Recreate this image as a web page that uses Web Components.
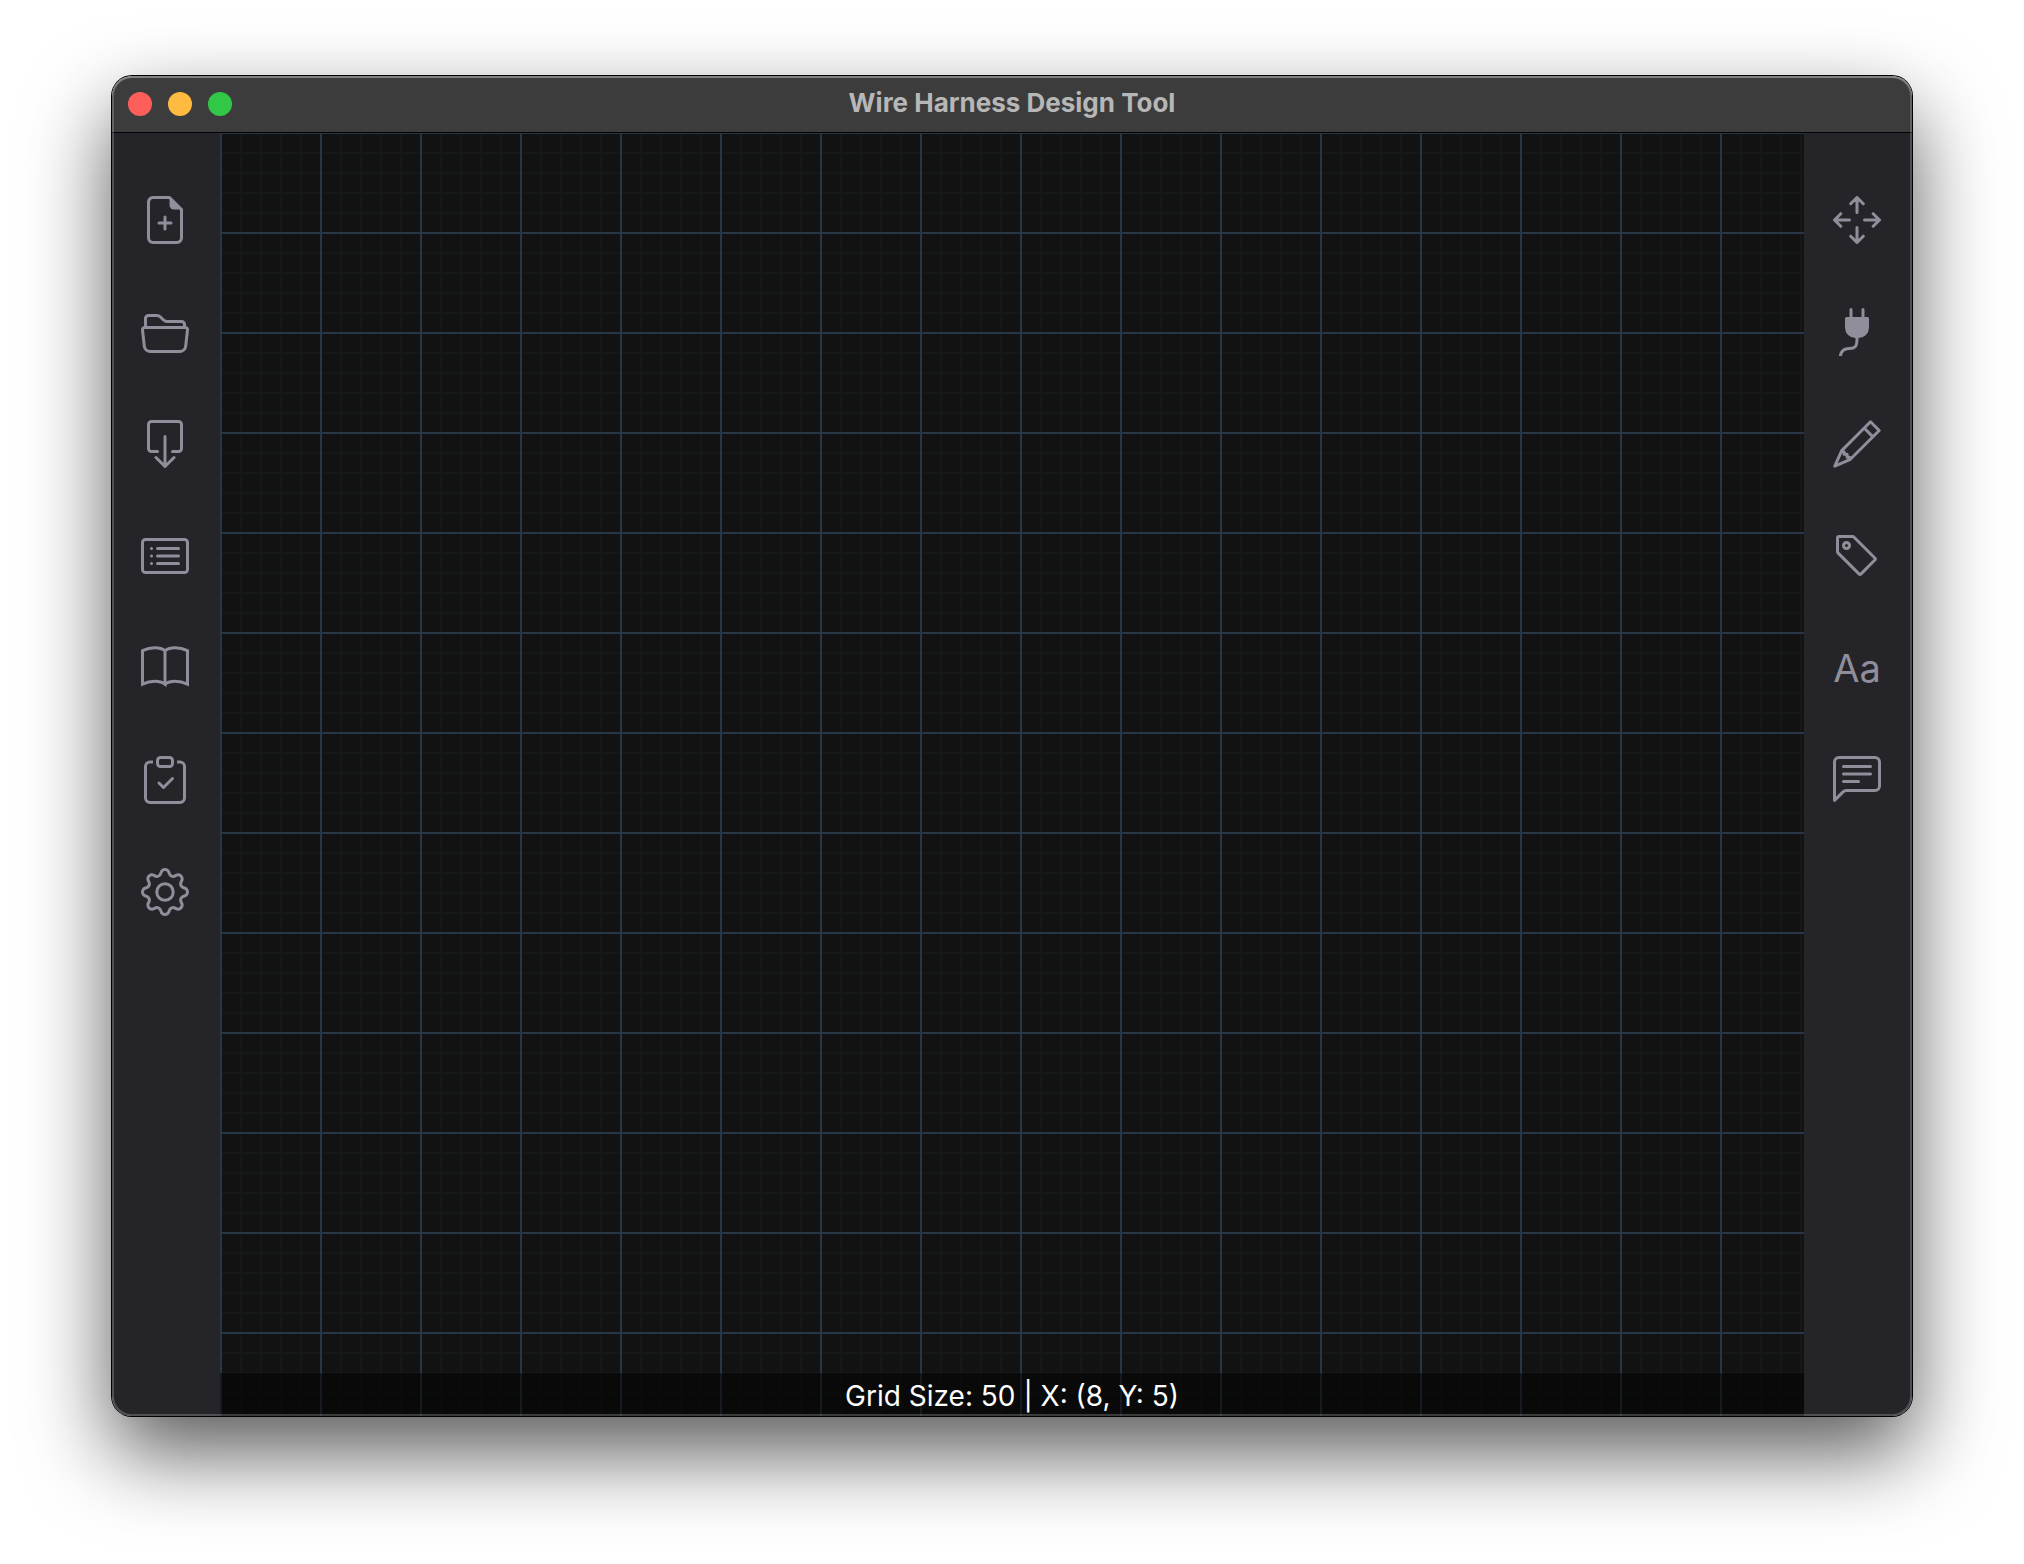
<!DOCTYPE html>
<html lang="en">
<head>
<meta charset="utf-8">
<title>Wire Harness Design Tool</title>
<style>
  html, body { height: 100%; margin: 0; }
  body { background: #fff; font-family: Inter, "Liberation Sans", sans-serif; }
</style>
</head>
<body>
<harness-app></harness-app>

<script>
const define = (name, html, setup) => {
  const template = document.createElement('template');
  template.innerHTML = html;
  customElements.define(name, class extends HTMLElement {
    constructor() {
      super();
      this.attachShadow({ mode: 'open' }).append(template.content.cloneNode(true));
    }
    connectedCallback() { if (setup) setup(this); }
  });
};

// All icons are drawn on a 16 x 16 grid.
const line = (d) => `<path d="${d}" fill="none" stroke="currentColor" stroke-linecap="round" stroke-linejoin="round"/>`;
const sharp = (d) => `<path d="${d}" fill="none" stroke="currentColor"/>`;
const fill = (d) => `<path d="${d}" fill="currentColor" fill-rule="evenodd"/>`;
const icons = {
  file: line('M9.5.5H4A1.5 1.5 0 0 0 2.5 2v12A1.5 1.5 0 0 0 4 15.5h8a1.5 1.5 0 0 0 1.5-1.5V4.5zM8 7v4M6 9h4') +
        fill('M9.5.3v2.7A1.5 1.5 0 0 0 11 4.5h2.8z'),
  folder: line('M1.5 6.5V3.5a1 1 0 0 1 1-1h2.7c.6 0 1 .2 1.4.6l.8.8c.4.4.8.6 1.4.6h4.7a1 1 0 0 1 1 1v1M1.2 6.5h13.6a.7.7 0 0 1 .7.8l-.6 5.4a2 2 0 0 1-2 1.8H3.1a2 2 0 0 1-2-1.8L.5 7.3a.7.7 0 0 1 .7-.8z'),
  save: line('M5.5 10.5h-2a1 1 0 0 1-1-1v-8a1 1 0 0 1 1-1h9a1 1 0 0 1 1 1v8a1 1 0 0 1-1 1h-2M8 5.5v10M5 12.5l3 3 3-3'),
  list: line('M1.5 2.5h13a1 1 0 0 1 1 1v9a1 1 0 0 1-1 1h-13a1 1 0 0 1-1-1v-9a1 1 0 0 1 1-1zM5.5 5.5h7M5.5 8h7M5.5 10.5h7M3.5 5.5h0M3.5 8h0M3.5 10.5h0'),
  book: sharp('M8 2.2C6.3.9 3.2.9.5 2.2v11.2c2.7-1.3 5.8-1.3 7.5 0zM8 2.2C9.7.9 12.800.9 15.5 2.2v11.2c-2.7-1.3-5.8-1.3-7.5 0'),
  check: line('M10.5 7.5 7.5 10.5 6 9') +
         sharp('M4 2H3a1.5 1.5 0 0 0-1.5 1.5V14A1.5 1.5 0 0 0 3 15.5h10a1.5 1.5 0 0 0 1.5-1.5V3.5A1.5 1.5 0 0 0 13 2h-1') +
         '<rect x="5.5" y=".5" width="5" height="3" rx="1" fill="none" stroke="currentColor"/>',
  gear: fill('M8 4.754a3.246 3.246 0 1 0 0 6.492 3.246 3.246 0 0 0 0-6.492zM5.754 8a2.246 2.246 0 1 1 4.492 0 2.246 2.246 0 0 1-4.492 0z') +
        fill('M9.796 1.343c-.527-1.79-3.065-1.79-3.592 0l-.094.319a.873.873 0 0 1-1.255.52l-.292-.16c-1.64-.892-3.433.902-2.54 2.541l.159.292a.873.873 0 0 1-.52 1.255l-.319.094c-1.79.527-1.79 3.065 0 3.592l.319.094a.873.873 0 0 1 .52 1.255l-.16.292c-.892 1.64.901 3.434 2.541 2.54l.292-.159a.873.873 0 0 1 1.255.52l.094.319c.527 1.79 3.065 1.79 3.592 0l.094-.319a.873.873 0 0 1 1.255-.52l.292.16c1.64.893 3.434-.902 2.54-2.541l-.159-.292a.873.873 0 0 1 .52-1.255l.319-.094c1.79-.527 1.79-3.065 0-3.592l-.319-.094a.873.873 0 0 1-.52-1.255l.16-.292c.893-1.64-.902-3.433-2.541-2.54l-.292.159a.873.873 0 0 1-1.255-.52l-.094-.319zm-2.633.283c.246-.835 1.428-.835 1.674 0l.094.319a1.873 1.873 0 0 0 2.693 1.115l.291-.16c.764-.415 1.6.42 1.184 1.185l-.159.292a1.873 1.873 0 0 0 1.116 2.692l.318.094c.835.246.835 1.428 0 1.674l-.319.094a1.873 1.873 0 0 0-1.115 2.693l.16.291c.415.764-.42 1.6-1.185 1.184l-.291-.159a1.873 1.873 0 0 0-2.693 1.116l-.094.318c-.246.835-1.428.835-1.674 0l-.094-.319a1.873 1.873 0 0 0-2.692-1.115l-.292.16c-.764.415-1.6-.42-1.184-1.185l.159-.291A1.873 1.873 0 0 0 1.945 8.93l-.319-.094c-.835-.246-.835-1.428 0-1.674l.319-.094A1.873 1.873 0 0 0 3.06 4.377l-.16-.292c-.415-.764.42-1.6 1.185-1.184l.292.159a1.873 1.873 0 0 0 2.692-1.115l.094-.319z'),
  move: line('M8 5.5v-5M5.900 2.600 8 .5l2.100 2.100M8 10.5v5M5.900 13.400 8 15.5l2.100-2.100M5.5 8h-5M2.600 5.900.5 8l2.100 2.100M10.5 8h5M13.400 5.900 15.5 8l-2.100 2.100'),
  plug: fill('M6 0a.5.5 0 0 1 .5.5V3h3V.5a.5.5 0 0 1 1 0V3h1a.5.5 0 0 1 .5.5v3A3.5 3.5 0 0 1 8.5 10c-.002.434-.01.845-.04 1.22-.041.514-.126 1.003-.317 1.424a2.083 2.083 0 0 1-.97 1.028C6.725 13.9 6.169 14 5.5 14c-.998 0-1.61.33-1.974.718A1.922 1.922 0 0 0 3 16H2c0-.616.232-1.367.797-1.968C3.374 13.42 4.261 13 5.5 13c.581 0 .962-.088 1.218-.219.241-.123.4-.3.514-.55.121-.266.193-.621.23-1.09.027-.34.035-.718.037-1.141A3.5 3.5 0 0 1 4 6.5v-3a.5.5 0 0 1 .5-.5h1V.5A.5.5 0 0 1 6 0z'),
  pencil: '<path d="M12.5.6 15.4 3.5 5.8 13.1.6 15.4 2.9 10.2zM10.300 2.600l3.100 3.100M2.900 10.300l.8.3v.8h1v1h.8l.2.6" fill="none" stroke="currentColor" stroke-linejoin="round"/>',
  tag: fill('M2 1h4.586a1 1 0 0 1 .707.293l7 7a1 1 0 0 1 0 1.414l-4.586 4.586a1 1 0 0 1-1.414 0l-7-7A1 1 0 0 1 1 6.586V2a1 1 0 0 1 1-1zm0 5.586 7 7L13.586 9l-7-7H2v4.586z') +
       '<circle cx="4.5" cy="4.5" r="1" fill="none" stroke="currentColor"/>',
  note: fill('M14 1a1 1 0 0 1 1 1v8a1 1 0 0 1-1 1H4.414A2 2 0 0 0 3 11.586l-2 2V2a1 1 0 0 1 1-1h12zM2 0a2 2 0 0 0-2 2v12.793a.5.5 0 0 0 .854.353l2.853-2.853A1 1 0 0 1 4.414 12H14a2 2 0 0 0 2-2V2a2 2 0 0 0-2-2H2z') +
        line('M3.5 3.5h9M3.5 6h9M3.5 8.5h5')
};

define('tool-button', `
  <style>
    :host { display: block; color: #908e9b; }
    button { display: flex; align-items: center; justify-content: center; width: 48px; height: 48px;
      margin: 0; padding: 0; border: 0; background: none; color: inherit; font: 400 38px/50px Inter, sans-serif; }
    svg { display: block; width: 100%; height: 100%; }
  </style>
  <button type="button"><slot></slot></button>
`, (el) => {
  const button = el.shadowRoot.querySelector('button');
  button.setAttribute('aria-label', el.getAttribute('label'));
  const icon = icons[el.getAttribute('icon')];
  if (icon) button.innerHTML = `<svg viewBox="0 0 16 16" aria-hidden="true">${icon}</svg>`;
});

define('tool-rail', `
  <style>
    :host { display: flex; flex: none; flex-direction: column; align-items: center; gap: 64px;
      box-sizing: border-box; width: 108px; padding: 63px 2px 0 0; background: #252429; }
  </style>
  <slot></slot>
`);

define('title-bar', `
  <style>
    :host { display: grid; grid-template-columns: 1fr auto 1fr; align-items: center; flex: none;
      height: 56px; padding: 0 16px; background: #3c3c3c; border-bottom: 1px solid #000; }
    div { display: flex; gap: 16px; }
    button { width: 24px; height: 24px; padding: 0; border: 0; border-radius: 50%; }
    .close { background: #ff5f5a; }
    .minimise { background: #ffbb41; }
    .zoom { background: #33c748; }
    h1 { margin: 0; padding-bottom: 2px; color: #b7b7b7; font: 700 26px/32px Inter, sans-serif; }
  </style>
  <div>
    <button type="button" class="close" aria-label="Close"></button>
    <button type="button" class="minimise" aria-label="Minimise"></button>
    <button type="button" class="zoom" aria-label="Zoom"></button>
  </div>
  <h1><slot></slot></h1>
`);

define('status-bar', `
  <style>
    :host { display: flex; justify-content: center; padding: 7px 0 4px;
      background: rgba(0, 0, 0, .5); color: #fff; font: 400 28px/32px Inter, sans-serif; }
  </style>
  <slot></slot>
`);

define('grid-canvas', `
  <style>
    :host { --major: #283745; --minor: #141918;
      display: flex; flex: 1; flex-direction: column; justify-content: flex-end; min-width: 0;
      background-color: #121212;
      background-image:
        linear-gradient(to right, var(--major) 2px, transparent 2px),
        linear-gradient(to bottom, var(--major) 2px, transparent 2px),
        linear-gradient(to right, var(--minor) 2px, transparent 2px),
        linear-gradient(to bottom, var(--minor) 2px, transparent 2px);
      background-size: 100px 100px, 100px 100px, 20px 20px, 20px 20px;
      background-position: 0 -1px; }
  </style>
  <slot></slot>
`);

define('app-window', `
  <style>
    :host { position: relative; display: flex; flex: 1; flex-direction: column; border-radius: 20px;
      box-shadow: 0 0 0 1px #000, 0 36px 84px rgba(0, 0, 0, .66); }
    .frame { display: flex; flex: 1; flex-direction: column; overflow: hidden; border-radius: inherit; }
    main { display: flex; flex: 1; min-height: 0; }
    :host::after { content: ""; position: absolute; inset: 0; border-radius: inherit; pointer-events: none;
      box-shadow: inset 0 2px rgba(255, 255, 255, .2), inset 0 0 0 2px rgba(255, 255, 255, .2); }
  </style>
  <div class="frame"><slot name="title"></slot><main><slot></slot></main></div>
`);

define('harness-app', `
  <style>
    :host { display: flex; box-sizing: border-box; min-height: 100vh; padding: 76px 112px 148px; overflow: hidden; }
  </style>
  <app-window>
    <title-bar slot="title">Wire Harness Design Tool</title-bar>
    <tool-rail>
      <tool-button icon="file" label="New"></tool-button>
      <tool-button icon="folder" label="Open"></tool-button>
      <tool-button icon="save" label="Save"></tool-button>
      <tool-button icon="list" label="Parts list"></tool-button>
      <tool-button icon="book" label="Library"></tool-button>
      <tool-button icon="check" label="Design check"></tool-button>
      <tool-button icon="gear" label="Settings"></tool-button>
    </tool-rail>
    <grid-canvas><status-bar>Grid Size: 50 | X: (8, Y: 5)</status-bar></grid-canvas>
    <tool-rail>
      <tool-button icon="move" label="Move"></tool-button>
      <tool-button icon="plug" label="Connector"></tool-button>
      <tool-button icon="pencil" label="Draw wire"></tool-button>
      <tool-button icon="tag" label="Label"></tool-button>
      <tool-button label="Text">Aa</tool-button>
      <tool-button icon="note" label="Note"></tool-button>
    </tool-rail>
  </app-window>
`);
</script>
</body>
</html>
